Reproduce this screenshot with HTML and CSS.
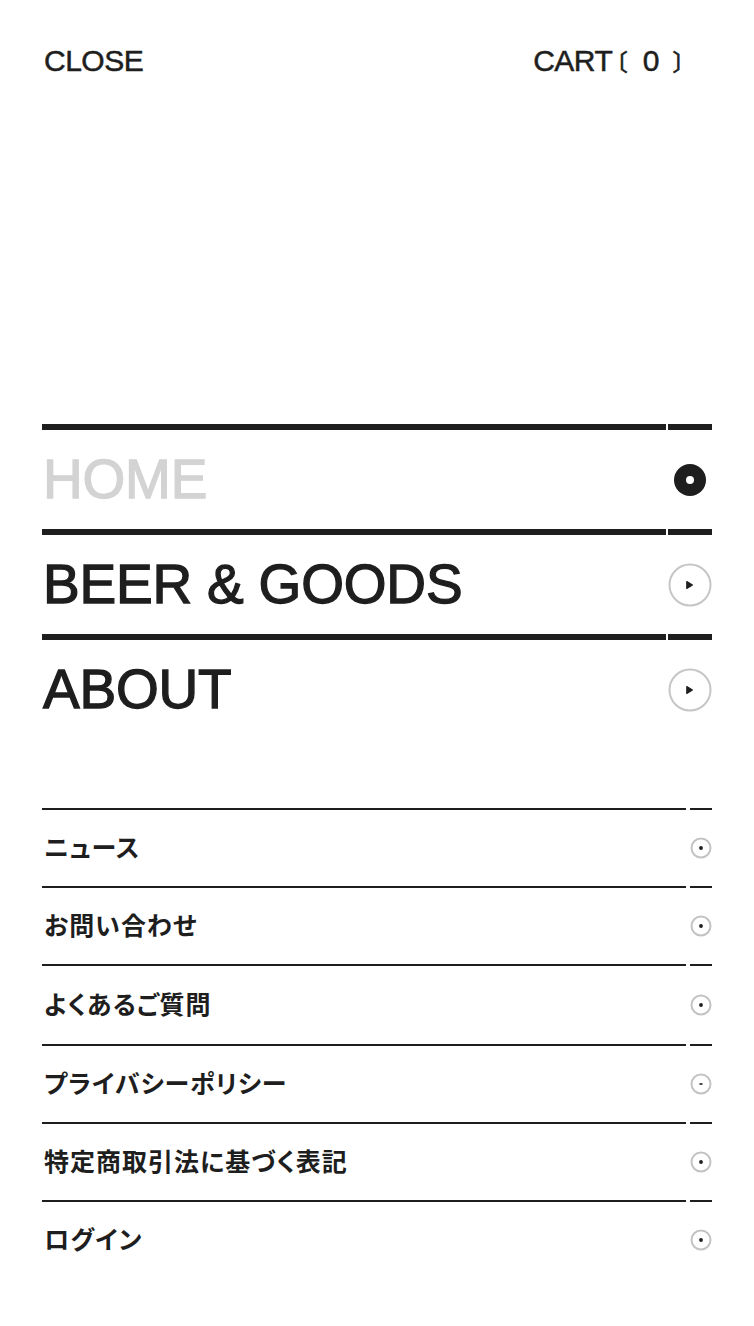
FILE: index.html
```html
<!DOCTYPE html>
<html lang="ja">
<head>
<meta charset="utf-8">
<title>Menu</title>
<link rel="stylesheet" href="styles.css">
</head>
<body>
<div class="menu">
  <header class="header">
    <a class="close" href="#">CLOSE</a>
    <a class="cart" href="#"><span class="cart-word">CART</span><span class="br br-open">〔</span><span class="count">0</span><span class="br br-close">〕</span></a>
  </header>

  <nav class="main-nav">
    <a class="main-row" href="#">
      <span class="main-label is-current">HOME</span>
      <span class="main-icon">
        <svg width="44" height="44" viewBox="0 0 44 44"><circle cx="22" cy="22" r="16" fill="#1e1e1e"/><circle cx="22" cy="22" r="4" fill="#fff"/></svg>
      </span>
    </a>
    <a class="main-row" href="#">
      <span class="main-label">BEER &amp; GOODS</span>
      <span class="main-icon">
        <svg width="44" height="44" viewBox="0 0 44 44"><circle cx="22" cy="22" r="20.5" fill="none" stroke="#c6c6c6" stroke-width="2"/><path d="M18.8 18.6 L24.4 22 L18.8 25.4 Z" fill="#1e1e1e" stroke="#1e1e1e" stroke-width="1.2" stroke-linejoin="round"/></svg>
      </span>
    </a>
    <a class="main-row" href="#">
      <span class="main-label">ABOUT</span>
      <span class="main-icon">
        <svg width="44" height="44" viewBox="0 0 44 44"><circle cx="22" cy="22" r="20.5" fill="none" stroke="#c6c6c6" stroke-width="2"/><path d="M18.8 18.6 L24.4 22 L18.8 25.4 Z" fill="#1e1e1e" stroke="#1e1e1e" stroke-width="1.2" stroke-linejoin="round"/></svg>
      </span>
    </a>
  </nav>

  <nav class="sub-nav">
    <a class="sub-row" href="#"><span class="sub-label">ニュース</span><span class="sub-icon"><svg width="22" height="22" viewBox="0 0 22 22"><circle cx="11" cy="11" r="9.5" fill="none" stroke="#c3c3c3" stroke-width="2"/><circle cx="11" cy="11" r="1.9" fill="#1e1e1e"/></svg></span></a>
    <a class="sub-row" href="#"><span class="sub-label">お問い合わせ</span><span class="sub-icon"><svg width="22" height="22" viewBox="0 0 22 22"><circle cx="11" cy="11" r="9.5" fill="none" stroke="#c3c3c3" stroke-width="2"/><circle cx="11" cy="11" r="1.9" fill="#1e1e1e"/></svg></span></a>
    <a class="sub-row sub-row-tall" href="#"><span class="sub-label">よくあるご質問</span><span class="sub-icon"><svg width="22" height="22" viewBox="0 0 22 22"><circle cx="11" cy="11" r="9.5" fill="none" stroke="#c3c3c3" stroke-width="2"/><circle cx="11" cy="11" r="1.9" fill="#1e1e1e"/></svg></span></a>
    <a class="sub-row" href="#"><span class="sub-label">プライバシーポリシー</span><span class="sub-icon"><svg width="22" height="22" viewBox="0 0 22 22"><circle cx="11" cy="11" r="9.5" fill="none" stroke="#c3c3c3" stroke-width="2"/><rect x="9.5" y="10.2" width="3" height="1.6" fill="#1e1e1e"/></svg></span></a>
    <a class="sub-row" href="#"><span class="sub-label">特定商取引法に基づく表記</span><span class="sub-icon"><svg width="22" height="22" viewBox="0 0 22 22"><circle cx="11" cy="11" r="9.5" fill="none" stroke="#c3c3c3" stroke-width="2"/><circle cx="11" cy="11" r="1.9" fill="#1e1e1e"/></svg></span></a>
    <a class="sub-row" href="#"><span class="sub-label">ログイン</span><span class="sub-icon"><svg width="22" height="22" viewBox="0 0 22 22"><circle cx="11" cy="11" r="9.5" fill="none" stroke="#c3c3c3" stroke-width="2"/><circle cx="11" cy="11" r="1.9" fill="#1e1e1e"/></svg></span></a>
  </nav>
</div>
</body>
</html>
```
FILE: styles.css
```css
* { box-sizing: border-box; }

html, body {
  margin: 0;
  padding: 0;
  background: #fff;
}

body {
  font-family: "Liberation Sans", Arial, "Noto Sans CJK JP", sans-serif;
  color: #1e1e1e;
}

a {
  color: inherit;
  text-decoration: none;
}

.menu {
  padding: 0 42px;
}

/* header */
.header {
  display: flex;
  justify-content: space-between;
  align-items: flex-start;
  padding-top: 46px;
  padding-left: 2px;
}

.close,
.cart {
  font-size: 30px;
  line-height: 30px;
  display: flex;
  align-items: center;
  letter-spacing: -0.5px;
  -webkit-text-stroke: 0.5px #1e1e1e;
}

.cart {
  padding-right: 28px;
}

.br {
  font-family: "Noto Sans CJK JP", sans-serif;
  font-size: 23px;
  line-height: 30px;
  letter-spacing: 0;
  font-feature-settings: "halt";
  -webkit-text-stroke: 0.7px #1e1e1e;
}

.br-open {
  margin-left: 4px;
}

.count {
  margin-left: 15px;
  margin-right: 13px;
  letter-spacing: 0;
}

/* main nav */
.main-nav {
  margin-top: 348px;
}

.main-row {
  display: grid;
  grid-template-columns: 1fr 44px;
  column-gap: 2px;
  height: 105px;
}

.main-label,
.main-icon {
  border-top: 6px solid #1e1e1e;
  display: flex;
  align-items: center;
}

.main-label {
  font-size: 55px;
  line-height: 1;
  padding-left: 1px;
  letter-spacing: -0.2px;
  -webkit-text-stroke: 1.3px #1e1e1e;
}

.main-label.is-current {
  color: #d3d3d3;
  -webkit-text-stroke: 1.3px #d3d3d3;
}

.main-icon {
  justify-content: center;
}

.main-icon svg {
  display: block;
}

/* sub nav */
.sub-nav {
  margin-top: 69px;
}

.sub-row {
  display: grid;
  grid-template-columns: 1fr 22px;
  column-gap: 4px;
  height: 78px;
}

.sub-row-tall {
  height: 80px;
}

.sub-label,
.sub-icon {
  border-top: 2px solid #1e1e1e;
  display: flex;
  align-items: center;
}

.sub-label {
  font-family: "Noto Sans CJK JP", sans-serif;
  font-weight: 700;
  font-size: 25px;
  line-height: 1;
  letter-spacing: 1px;
  font-feature-settings: "palt";
  padding-left: 2px;
  padding-bottom: 3px;
}

.sub-icon svg {
  display: block;
}
```
